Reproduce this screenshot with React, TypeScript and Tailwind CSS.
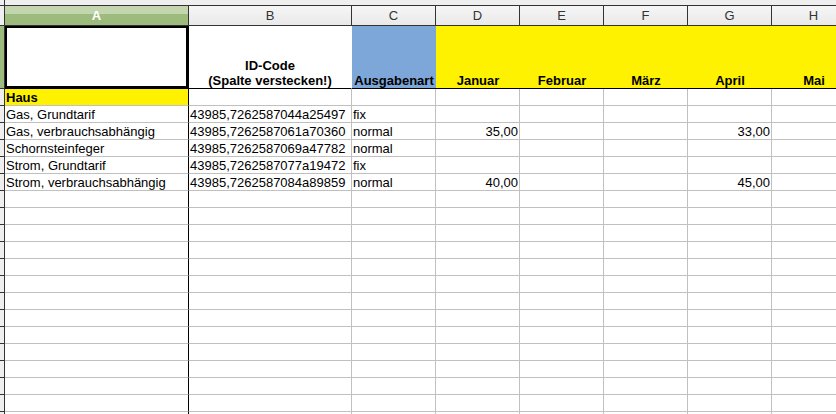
import React from "react";

const COLS = ["A", "B", "C", "D", "E", "F", "G", "H"];
const GRID = "grid grid-cols-[5px_184px_163px_84px_84px_84px_84px_84px_84px]";

type Row = {
  a: string;
  b: string;
  c: string;
  d?: string;
  g?: string;
};

const rows: Row[] = [
  { a: "Gas, Grundtarif", b: "43985,7262587044a25497", c: "fix" },
  { a: "Gas, verbrauchsabhängig", b: "43985,7262587061a70360", c: "normal", d: "35,00", g: "33,00" },
  { a: "Schornsteinfeger", b: "43985,7262587069a47782", c: "normal" },
  { a: "Strom, Grundtarif", b: "43985,7262587077a19472", c: "fix" },
  { a: "Strom, verbrauchsabhängig", b: "43985,7262587084a89859", c: "normal", d: "40,00", g: "45,00" },
];

const emptyRows = Array.from({ length: 14 }, (_, i) => i);

function RowHead({ selected = false }: { selected?: boolean }) {
  return (
    <div
      className={`border-r border-b border-[#333] ${selected ? "bg-[#9dbb7d]" : "bg-[#efefef]"}`}
    />
  );
}

function DataCell({
  children,
  right = false,
  first = false,
}: {
  children?: React.ReactNode;
  right?: boolean;
  first?: boolean;
}) {
  return (
    <div
      className={`flex items-end overflow-visible whitespace-nowrap border-b border-[#c0c0c0] px-[1px] ${
        first ? "border-r border-r-black" : "border-r"
      } ${right ? "justify-end" : ""}`}
    >
      {children}
    </div>
  );
}

export default function App() {
  return (
    <div className="h-[414px] w-[836px] overflow-hidden bg-white font-['Liberation_Sans',Arial,sans-serif] text-[13px] leading-[15px] text-black">
      {/* top strip */}
      <div className="flex h-[6px] border-b border-[#333] bg-[#efefef]">
        <div className="w-[5px] border-r border-[#333]" />
      </div>

      {/* column headers */}
      <div className={`${GRID} h-[20px]`}>
        <div className="border-r border-b border-[#333] bg-[#efefef]" />
        {COLS.map((c) =>
          c === "A" ? (
            <div
              key={c}
              className="flex items-center justify-center border-r border-b border-[#333] bg-[linear-gradient(#c3d6af_0_42%,#9dbb7d_42%)] font-bold text-white"
            >
              {c}
            </div>
          ) : (
            <div
              key={c}
              className="flex items-center justify-center border-r border-b border-[#333] bg-gradient-to-b from-[#f6f6f6] to-[#e9e9e9] text-[#333]"
            >
              {c}
            </div>
          )
        )}
      </div>

      {/* row 1: headings */}
      <div className={`${GRID} h-[63px] font-bold`}>
        <RowHead selected />
        <div className="border-r border-b border-black">
          <div className="h-full w-full border-2 border-black" />
        </div>
        <div className="flex flex-col items-center justify-end border-r border-b border-r-transparent border-b-black text-center">
          <span>ID-Code</span>
          <span>(Spalte verstecken!)</span>
        </div>
        <div className="flex items-end justify-center whitespace-nowrap border-b border-black bg-[#7ea7d9]">
          Ausgabenart
        </div>
        {["Januar", "Februar", "März", "April", "Mai"].map((m) => (
          <div
            key={m}
            className="flex items-end justify-center border-b border-black bg-[#fff200]"
          >
            {m}
          </div>
        ))}
      </div>

      {/* row 2: section */}
      <div className={`${GRID} h-[17px]`}>
        <RowHead />
        <div className="flex items-end border-r border-b border-r-black border-b-[#c0c0c0] bg-[#fff200] px-[1px] font-bold">
          Haus
        </div>
        {COLS.slice(1).map((c) => (
          <div key={c} className="border-r border-b border-[#c0c0c0]" />
        ))}
      </div>

      {/* data rows */}
      {rows.map((r) => (
        <div key={r.b} className={`${GRID} h-[17px]`}>
          <RowHead />
          <DataCell first>{r.a}</DataCell>
          <DataCell>{r.b}</DataCell>
          <DataCell>{r.c}</DataCell>
          <DataCell right>{r.d}</DataCell>
          <DataCell />
          <DataCell />
          <DataCell right>{r.g}</DataCell>
          <DataCell />
        </div>
      ))}

      {/* empty rows */}
      {emptyRows.map((i) => (
        <div key={i} className={`${GRID} h-[17px]`}>
          <RowHead />
          <DataCell first />
          <DataCell />
          <DataCell />
          <DataCell />
          <DataCell />
          <DataCell />
          <DataCell />
          <DataCell />
        </div>
      ))}
    </div>
  );
}
